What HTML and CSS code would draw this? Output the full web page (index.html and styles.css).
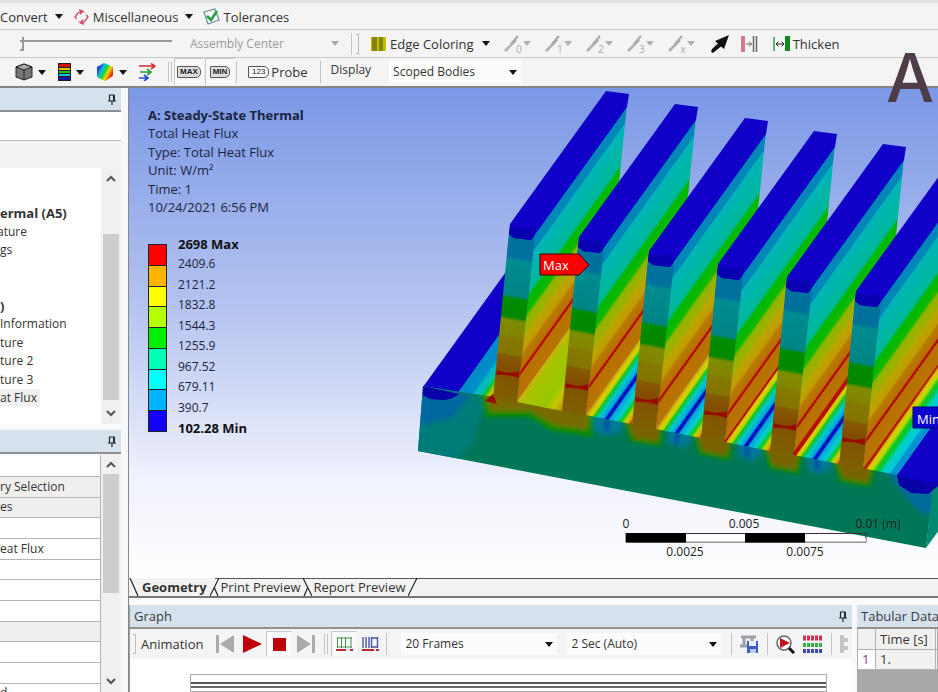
FILE: index.html
```html
<!DOCTYPE html>
<html lang="en">
<head>
<meta charset="utf-8">
<title>Steady-State Thermal</title>
<link rel="stylesheet" href="styles.css">
</head>
<body>
<svg class="defs" aria-hidden="true">
  <defs>
    <symbol id="pin" viewBox="0 0 8 11"><path d="M1.5 6.5V1h4.500v5.500M0 7h8M4 7v4" fill="none" stroke="#222" stroke-width="1.200"/><path d="M5 1h1.800v6H5z" fill="#222"/></symbol>
    <symbol id="edge" viewBox="0 0 18 17"><path d="M1 16 12 5" stroke="#b0b0b0" stroke-width="2.500"/><path d="M7 9 14 1" stroke="#a8a8a8" stroke-width="2"/></symbol>
    <symbol id="up" viewBox="0 0 10 8"><path d="M1 6 5 2 9 6" fill="none" stroke="#555" stroke-width="2"/></symbol>
    <symbol id="down" viewBox="0 0 10 8"><path d="M1 2 5 6 9 2" fill="none" stroke="#555" stroke-width="2"/></symbol>
  </defs>
</svg>
<div class="app">
  <header class="bars">
    <div class="bar bar-menu">
      <button class="tool">Convert<i class="caret"></i></button>
      <button class="tool"><svg width="17" height="16" viewBox="0 0 17 16"><path d="M6 3 2 8l4 5M11 13l4-5-4-5" fill="none" stroke="#d4476a" stroke-width="1.300" stroke-dasharray="9 3"/><path d="M6 0l5 2-4 4zM11 16l-5-2 4-4z" fill="#d4476a"/></svg>Miscellaneous<i class="caret"></i></button>
      <button class="tool"><svg width="17" height="17" viewBox="0 0 17 17"><path d="M1 4 12 1l4 11-11 4z" fill="#fff" stroke="#67859a" stroke-width="1.200"/><path d="M4 8l4 4 6-9" fill="none" stroke="#21a03b" stroke-width="2.500"/></svg>Tolerances</button>
    </div>
    <div class="bar bar-edges">
      <input class="explode" type="range" min="0" max="100" value="0" aria-label="Explode factor">
      <label class="pick pick-assembly"><select aria-label="Explode center" disabled><option>Assembly Center</option></select></label>
      <i class="rule"></i><i class="grip"></i>
      <button class="tool edge-color"><svg width="15" height="14" viewBox="0 0 15 14"><path d="M0 0h15v14H0z" fill="#c4c000"/><path d="M1 0h5v14H1zM8 0h4v14H8z" fill="#858400"/></svg>Edge Coloring<i class="caret"></i></button>
      <div class="edge-set">
        <button class="tool dim" aria-label="Edge 0"><span class="edge"><svg width="18" height="17"><use href="#edge"/></svg><small>0</small></span><i class="caret"></i></button>
        <button class="tool dim" aria-label="Edge 1"><span class="edge"><svg width="18" height="17"><use href="#edge"/></svg><small>1</small></span><i class="caret"></i></button>
        <button class="tool dim" aria-label="Edge 2"><span class="edge"><svg width="18" height="17"><use href="#edge"/></svg><small>2</small></span><i class="caret"></i></button>
        <button class="tool dim" aria-label="Edge 3"><span class="edge"><svg width="18" height="17"><use href="#edge"/></svg><small>3</small></span><i class="caret"></i></button>
        <button class="tool dim" aria-label="Edge x"><span class="edge"><svg width="18" height="17"><use href="#edge"/></svg><small>x</small></span><i class="caret"></i></button>
      </div>
      <button class="tool" aria-label="Direction"><svg width="18" height="18" viewBox="0 0 18 18"><path d="M18 0 13 14 10 11.500 2 18 0 17l1-3 6-5.500L4 6z" fill="#111"/></svg></button>
      <button class="tool" aria-label="Show mesh edges"><svg width="17" height="16" viewBox="0 0 17 16"><path d="M0 0h4v16H0z" fill="#d17a8c"/><path d="M12.500 0v16M15.500 0v16" stroke="#666" stroke-width="1.500"/><path d="M5 8h6M8 5.500 10.500 8 8 10.500" fill="none" stroke="#666"/></svg></button>
      <button class="tool thicken"><svg width="17" height="16" viewBox="0 0 17 16"><path d="M1 1v14" stroke="#35a048" stroke-width="1.500"/><path d="M12 0h5v15h-5z" fill="#0d8a17"/><path d="M3 8h8M5.500 5.500 3 8l2.500 2.500M8.500 5.500 11 8l-2.500 2.500" fill="none" stroke="#222"/></svg>Thicken</button>
    </div>
    <div class="bar bar-result">
      <button class="tool" aria-label="Geometry display"><svg width="18" height="18" viewBox="0 0 18 18"><path d="M9 1 17 4v10l-8 3-8-3V4z" fill="#777" stroke="#222"/><path d="M1 4l8 3 8-3-8-3z" fill="#aaa" stroke="#222"/><path d="M9 7v10" stroke="#222"/></svg><i class="caret"></i></button>
      <button class="tool" aria-label="Contours"><svg width="13" height="18" viewBox="0 0 13 18"><path d="M0 0h13v18H0z" fill="#222"/><path d="M1 1h11v3H1z" fill="#d01010"/><path d="M1 5h11v2H1z" fill="#f0c000"/><path d="M1 8h11v2H1z" fill="#20c020"/><path d="M1 11h11v2H1z" fill="#00c8d0"/><path d="M1 14h11v3H1z" fill="#1515a0"/></svg><i class="caret"></i></button>
      <button class="tool" aria-label="Isosurfaces"><svg width="18" height="18" viewBox="0 0 18 18"><defs><linearGradient id="iso" x1="0" y1=".2" x2="1" y2=".8"><stop offset=".1" stop-color="#2038e0"/><stop offset=".3" stop-color="#00c0e0"/><stop offset=".5" stop-color="#30d030"/><stop offset=".65" stop-color="#f0e000"/><stop offset=".85" stop-color="#f03010"/></linearGradient></defs><path d="M8 0 17 4v9l-8 5-8-4V4z" fill="url(#iso)"/></svg><i class="caret"></i></button>
      <button class="tool vectors" aria-label="Vectors"><svg width="17" height="18" viewBox="0 0 17 18"><path d="M0 3h16M12 .5 16 3l-4 3" fill="none" stroke="#d82c35" stroke-width="1.600"/><path d="M1 9h10M8 6l4 3-4 3" fill="none" stroke="#2f9b38" stroke-width="1.600"/><path d="M0 15h8M5 12l4 3-4 3" fill="none" stroke="#2449d8" stroke-width="1.600"/></svg></button>
      <i class="grip grip-double"></i>
      <button class="tool pressed"><span class="tag">MAX</span></button>
      <button class="tool pressed"><span class="tag">MIN</span></button>
      <i class="rule"></i>
      <button class="tool probe"><span class="tag tag-light">123</span>Probe</button>
      <i class="rule"></i>
      <label class="display" for="bodies">Display</label>
      <span class="pick pick-bodies"><select id="bodies"><option>Scoped Bodies</option></select></span>
    </div>
  </header>

  <aside class="side">
    <section class="outline">
      <header class="cap"><svg width="8" height="11"><use href="#pin"/></svg></header>
      <div class="filter"></div>
      <div class="strip"></div>
      <div class="scroller">
        <ul class="tree">
          <li><b>ermal (A5)</b></li>
          <li class="cut">ature</li>
          <li>gs</li>
          <li>&nbsp;</li>
          <li>&nbsp;</li>
          <li><b>)</b></li>
          <li>Information</li>
          <li>ture</li>
          <li>ture 2</li>
          <li>ture 3</li>
          <li><span class="picked">at Flux</span></li>
        </ul>
        <div class="track"><svg width="10" height="8"><use href="#up"/></svg><i class="thumb thumb-tree"></i><svg width="10" height="8"><use href="#down"/></svg></div>
      </div>
    </section>
    <section class="details">
      <header class="cap"><svg width="8" height="11"><use href="#pin"/></svg></header>
      <div class="scroller">
        <table class="props">
          <tbody>
            <tr><td></td></tr>
            <tr class="shade"><td>ry Selection</td></tr>
            <tr class="shade"><td>es</td></tr>
            <tr><td></td></tr>
            <tr><td>eat Flux</td></tr>
            <tr><td></td></tr>
            <tr><td></td></tr>
            <tr><td></td></tr>
            <tr class="shade"><td></td></tr>
            <tr><td></td></tr>
            <tr><td></td></tr>
            <tr><td>d</td></tr>
          </tbody>
        </table>
        <div class="track"><svg width="10" height="8"><use href="#up"/></svg><i class="thumb thumb-props"></i><svg width="10" height="8"><use href="#down"/></svg></div>
      </div>
    </section>
  </aside>

  <main class="work">
    <section class="view">
      <svg class="model" viewBox="130 88 808 490" preserveAspectRatio="xMaxYMin meet" role="img" aria-label="Heat flux contours on a finned heat sink">
        <defs>
          <linearGradient id="face" gradientUnits="userSpaceOnUse" x1="534" y1="237" x2="601" y2="285">
            <stop offset=".01" stop-color="#0085b8"/><stop offset=".09" stop-color="#0088b8"/>
            <stop offset=".1" stop-color="#00b4b8"/><stop offset=".34" stop-color="#00b898"/>
            <stop offset=".37" stop-color="#00b800"/><stop offset=".47" stop-color="#10b800"/>
            <stop offset=".5" stop-color="#90b400"/><stop offset=".6" stop-color="#a4b000"/>
            <stop offset=".61" stop-color="#bca600"/><stop offset=".7" stop-color="#c09c00"/>
            <stop offset=".72" stop-color="#b87c00"/><stop offset=".81" stop-color="#b86c00"/>
            <stop offset=".815" stop-color="#b41000"/><stop offset=".84" stop-color="#b41000"/>
            <stop offset=".845" stop-color="#b87000"/><stop offset="1" stop-color="#b87400"/>
          </linearGradient>
          <linearGradient id="front" gradientUnits="userSpaceOnUse" x1="509" y1="234" x2="479" y2="397">
            <stop offset=".13" stop-color="#00709c"/><stop offset=".15" stop-color="#008c90"/>
            <stop offset=".36" stop-color="#008484"/><stop offset=".38" stop-color="#008c00"/>
            <stop offset=".49" stop-color="#048800"/><stop offset=".51" stop-color="#7e8c00"/>
            <stop offset=".6" stop-color="#848400"/><stop offset=".61" stop-color="#847a00"/>
            <stop offset=".71" stop-color="#847400"/><stop offset=".72" stop-color="#845c00"/>
            <stop offset=".8" stop-color="#844c00"/><stop offset=".9" stop-color="#805800"/>
            <stop offset="1" stop-color="#7c6000"/>
          </linearGradient>
          <linearGradient id="floorA" gradientUnits="userSpaceOnUse" x1="517" y1="402" x2="551" y2="426">
            <stop offset="0" stop-color="#c8b400"/><stop offset=".15" stop-color="#a8c400"/>
            <stop offset=".6" stop-color="#98c800"/><stop offset=".8" stop-color="#c8c400"/><stop offset="1" stop-color="#b89000"/>
          </linearGradient>
          <linearGradient id="floorB" gradientUnits="userSpaceOnUse" x1="517" y1="402" x2="551" y2="426">
            <stop offset="0" stop-color="#c88c00"/><stop offset=".07" stop-color="#d8d000"/><stop offset=".14" stop-color="#c0d000"/>
            <stop offset=".18" stop-color="#10c820"/><stop offset=".25" stop-color="#00c880"/><stop offset=".29" stop-color="#00c8d0"/>
            <stop offset=".4" stop-color="#00a4d8"/><stop offset=".44" stop-color="#0010c0"/><stop offset=".49" stop-color="#0010c0"/>
            <stop offset=".53" stop-color="#00a4d8"/><stop offset=".68" stop-color="#00d0d0"/><stop offset=".78" stop-color="#10c820"/>
            <stop offset=".86" stop-color="#c0d400"/><stop offset=".95" stop-color="#d8a000"/><stop offset="1" stop-color="#b83000"/>
          </linearGradient>
          <linearGradient id="floorC" gradientUnits="userSpaceOnUse" x1="862" y1="468" x2="889" y2="487">
            <stop offset="0" stop-color="#b81000"/><stop offset=".1" stop-color="#b81000"/><stop offset=".16" stop-color="#d8c800"/>
            <stop offset=".28" stop-color="#c0d800"/><stop offset=".38" stop-color="#10c820"/><stop offset=".48" stop-color="#00c840"/>
            <stop offset=".58" stop-color="#00d0c8"/><stop offset=".78" stop-color="#00c8d8"/><stop offset=".8" stop-color="#0098d0"/><stop offset="1" stop-color="#0090d0"/>
          </linearGradient>
          <linearGradient id="floorL" gradientUnits="userSpaceOnUse" x1="457" y1="393" x2="485" y2="413">
            <stop offset="0" stop-color="#0088c8"/><stop offset=".38" stop-color="#0090c8"/><stop offset=".42" stop-color="#00b8c8"/>
            <stop offset=".6" stop-color="#00c0a8"/><stop offset=".68" stop-color="#10c020"/><stop offset=".8" stop-color="#c0c800"/>
            <stop offset=".92" stop-color="#c89000"/><stop offset="1" stop-color="#b41000"/>
          </linearGradient>
          <filter id="soft" x="-20%" y="-20%" width="140%" height="140%"><feGaussianBlur stdDeviation="2"/></filter>
          <clipPath id="baseClip"><path d="M423 386 493 397 862 466 934 482 926 548 418 451z"/></clipPath>
          <g id="fin">
            <path d="M534 235 627 104 610 272 517 402z" fill="url(#face)"/>
            <path d="M509 232 535 235 517 403 493 399z" fill="url(#front)"/>
            <path d="M497 370q11 5 22 1v7q-11-4-23-3z" fill="#980c00"/>
            <path d="M510 224 606 91 629 94 627 107 534 236 531 240 514 238 509 234z" fill="#1000c8"/>
            <path d="M510 226q12 4 24 1v9l-3 4-17-2-5-4z" fill="#0800b0"/>
          </g>
          <path id="floor" d="M517 402 562 411 655 281 610 272z"/>
          <path id="rim" d="M517 402 610 272" stroke="#b81000" fill="none"/>
        </defs>
        <path d="M423 387 516 258 560 267 457 394z" fill="#1000c8"/>
        <path d="M457 394 493 400 586 270 550 263z" fill="url(#floorL)"/>
        <path d="M423 386 493 397 862 466 934 482 926 548 418 451z" fill="#007858"/>
        <g clip-path="url(#baseClip)">
          <g filter="url(#soft)">
            <path d="M415 380 485 398 474 440 455 462 410 455z" fill="#007c78"/>
            <path d="M415 380 470 396 452 418 415 426z" fill="#0068a0"/>
            <path d="M480 385 488 414 530 414 553 428 590 433 592 402z" fill="#786c00" stroke="#088c00" stroke-width="6"/>
            <path d="M594 412v18l12 6 14-4 4-18z" fill="#007898"/>
            <path d="M623 413 632 440 659 444 664 417z" fill="#786400" stroke="#088800" stroke-width="4"/>
            <path d="M668 424v18l12 6 10-4 2-18z" fill="#007898"/>
            <path d="M692 426 701 453 728 458 734 430z" fill="#786400" stroke="#088800" stroke-width="4"/>
            <path d="M738 437v18l10 6 12-4 2-18z" fill="#007898"/>
            <path d="M762 439 771 467 797 472 803 444z" fill="#786400" stroke="#088800" stroke-width="4"/>
            <path d="M808 450v18l10 6 12-4 2-18z" fill="#007898"/>
            <path d="M832 452 841 480 869 485 876 457z" fill="#786400" stroke="#088800" stroke-width="4"/>
            <path d="M886 470 899 489 916 509 940 520V478z" fill="#006c9c"/>
            <path d="M607 419v12M677 432v12M747 445v12M817 458v12" stroke="#0040a8" stroke-width="4"/>
          </g>
          <path d="M423 386 459 394q-8 6-17 6l-12-1-7-4z" fill="#0a00a8"/>
        </g>
        <path d="M926 548 933 484 945 468V522z" fill="#008870"/>
        <path d="M862 468 897 475 990 345 955 338z" fill="url(#floorC)"/>
        <path d="M897 475 944 409V478L934 485z" fill="#1000c8"/>
        <path d="M897 475 934 484 938 480v6l-10 8-17-1-12-8z" fill="#0a00a8"/>
        <use href="#fin"/>
        <use href="#floor" fill="url(#floorA)"/>
        <use href="#fin" x="69" y="13"/>
        <use href="#floor" x="69" y="13" fill="url(#floorB)"/>
        <use href="#fin" x="139" y="27"/>
        <use href="#floor" x="139" y="27" fill="url(#floorB)"/>
        <use href="#fin" x="208" y="40"/>
        <use href="#floor" x="208" y="40" fill="url(#floorB)"/>
        <use href="#rim" x="208" y="40" stroke-width="2"/>
        <use href="#fin" x="277" y="53"/>
        <use href="#floor" x="277" y="53" fill="url(#floorB)"/>
        <use href="#rim" x="277" y="53" stroke-width="4"/>
        <use href="#fin" x="346" y="67"/>
        <path d="M493 394l-8 7 12 3z" fill="#980c00"/>
        <path d="M540 254H579L589 265 579 275H540z" fill="#fa0000" stroke="#400"/>
        <text x="543" y="270" class="flag">Max</text>
        <path d="M913 407H945V428H913z" fill="#0a00d0" stroke="#000070"/>
        <text x="917" y="424" class="flag">Min</text>
        <g class="scale">
          <path d="M626 533.500H866V542H626z" fill="none" stroke="#333"/>
          <path d="M686 534H746V541.500H686zM806 534H842L866 539V541.500H806z" fill="#fff"/>
          <path d="M626 533H686V542.500H626zM745 533H805V542.500H745z" fill="#000"/>
          <text x="626" y="528">0</text><text x="744" y="528">0.005</text><text x="878" y="528">0.01 (m)</text>
          <text x="685" y="556">0.0025</text><text x="805" y="556">0.0075</text>
        </g>
      </svg>
      <div class="overlay">
        <div class="info">
          <b>A: Steady-State Thermal</b>
          <span>Total Heat Flux</span>
          <span>Type: Total Heat Flux</span>
          <span>Unit: W/m²</span>
          <span>Time: 1</span>
          <span>10/24/2021 6:56 PM</span>
        </div>
        <div class="legend">
          <div class="ramp"><i class="c1"></i><i class="c2"></i><i class="c3"></i><i class="c4"></i><i class="c5"></i><i class="c6"></i><i class="c7"></i><i class="c8"></i><i class="c9"></i></div>
          <div class="levels"><b>2698 Max</b><span>2409.6</span><span>2121.2</span><span>1832.8</span><span>1544.3</span><span>1255.9</span><span>967.52</span><span>679.11</span><span>390.7</span><b>102.28 Min</b></div>
        </div>
      </div>
    </section>
    <nav class="tabs">
      <svg width="10" height="19" viewBox="0 0 10 19"><path d="M1 0 9 18" stroke="#222" stroke-width="1.200"/></svg>
      <button class="tab current">Geometry</button>
      <svg width="9" height="19" viewBox="0 0 9 19"><path d="M0 18 9 0M4 9 8 18" fill="none" stroke="#222" stroke-width="1.200"/></svg>
      <button class="tab">Print Preview</button>
      <svg width="9" height="19" viewBox="0 0 9 19"><path d="M0 0 9 18M1 18 5 9" fill="none" stroke="#222" stroke-width="1.200"/></svg>
      <button class="tab">Report Preview</button>
      <svg width="9" height="19" viewBox="0 0 9 19"><path d="M0 18 9 0" stroke="#222" stroke-width="1.200"/></svg>
    </nav>
    <div class="lower">
      <section class="graph">
        <header class="cap">Graph<svg width="8" height="11"><use href="#pin"/></svg></header>
        <div class="player">
          <i class="grip"></i>
          <span class="word">Animation</span>
          <button class="tool step" aria-label="First"><svg width="18" height="18" viewBox="0 0 18 18"><path d="M0 0h3v18H0zM18 0v18L4 9z" fill="#aaa"/></svg></button>
          <button class="tool step" aria-label="Play"><svg width="19" height="18" viewBox="0 0 19 18"><path d="M0 0v18l19-9z" fill="#c00008"/></svg></button>
          <button class="tool step pressed" aria-label="Stop"><svg width="13" height="13"><path d="M0 0h13v13H0z" fill="#c00008"/></svg></button>
          <button class="tool step" aria-label="Last"><svg width="18" height="18" viewBox="0 0 18 18"><path d="M15 0h3v18h-3zM0 0v18l14-9z" fill="#aaa"/></svg></button>
          <i class="grip grip-double"></i>
          <button class="tool chart pressed" aria-label="Distributed"><svg width="17" height="14" viewBox="0 0 17 14"><path d="M1.500 0v11M5.500 0v11M9.500 0v11M15 0v11M1 1h15M1 10h15" fill="none" stroke="#489050"/><path d="M0 13h10M14 13h3" stroke="#b82838" stroke-width="2"/></svg></button>
          <button class="tool chart" aria-label="Result sets"><svg width="17" height="14" viewBox="0 0 17 14"><path d="M1 0v11M4 0v11M7 0v11M9.500 0v11M15.500 0v11M10 1h6M10 10h6" fill="none" stroke="#4858a8" stroke-width="1.400"/><path d="M0 13h12M14 13h3" stroke="#b82838" stroke-width="2"/></svg></button>
          <i class="rule"></i>
          <span class="pick pick-frames"><select aria-label="Frames"><option>20 Frames</option></select></span>
          <span class="pick pick-time"><select aria-label="Duration"><option>2 Sec (Auto)</option></select></span>
          <i class="rule"></i>
          <button class="tool" aria-label="Export video"><svg width="19" height="19" viewBox="0 0 19 19"><path d="M1 2h15M4 3v8M0 11h7M12 3v3" fill="none" stroke="#9a9fa8" stroke-width="3"/><path d="M7 6h11v12H7z" fill="#3c60c8"/><path d="M9 6h7v5H9z" fill="#e8eefc"/><path d="M10 14h6v4h-6z" fill="#b8c8f0"/></svg></button>
          <i class="rule"></i>
          <button class="tool" aria-label="Zoom to fit"><svg width="19" height="19" viewBox="0 0 19 19"><circle cx="8" cy="8" r="7" fill="#fff" stroke="#666" stroke-width="1.500"/><path d="M4 3v10l10-5z" fill="#c01020"/><path d="M13 13l5 5" stroke="#111" stroke-width="3"/></svg></button>
          <button class="tool" aria-label="Sections"><svg width="20" height="18" viewBox="0 0 20 18"><path d="M0 3h20" stroke="#d83050" stroke-width="5" stroke-dasharray="3 1"/><path d="M0 10h20" stroke="#30b048" stroke-width="4" stroke-dasharray="3 1"/><path d="M0 16h20" stroke="#3848c0" stroke-width="4" stroke-dasharray="3 1"/></svg></button>
          <i class="rule"></i>
          <svg class="ghost" width="8" height="18" viewBox="0 0 8 18"><path d="M0 0h4v18H0zM4 3h4v4H4zM4 11h4v4H4z" fill="#c4c4c4"/></svg>
        </div>
        <div class="timeline"><div class="rail"></div></div>
      </section>
      <section class="tabular">
        <header class="cap">Tabular Data</header>
        <table class="grid">
          <thead><tr><th></th><th>Time [s]</th><th></th></tr></thead>
          <tbody><tr><th>1</th><td>1.</td><td></td></tr></tbody>
        </table>
      </section>
    </div>
  </main>
  <div class="watermark">A</div>
</div>
</body>
</html>
```
FILE: styles.css
```css
* { box-sizing: border-box; }
html, body { height: 100%; }
body {
  margin: 0;
  overflow: hidden;
  background: #f3f3f3;
  color: #333;
  font: 12px/18px "Open Sans", "Noto Sans", sans-serif;
}
svg { display: block; flex: none; }
.defs { position: absolute; width: 0; height: 0; }
button, select {
  margin: 0;
  padding: 0;
  border: 0;
  background: none;
  color: inherit;
  font: inherit;
  white-space: nowrap;
}
select { appearance: none; opacity: 1; }

.app {
  position: relative;
  display: grid;
  grid-template: auto minmax(0, 1fr) / 129px minmax(0, 1fr);
  height: 100vh;
  overflow: hidden;
}

/* Toolbars */
.bars { grid-column: 1 / -1; border-bottom: 2px solid #858585; }
.bar { display: flex; align-items: center; overflow: hidden; background: #f4f4f4; font-size: 13px; }
.bar-menu { height: 30px; gap: 10px; padding-top: 1px; border-top: 3px solid #e2e2e2; border-bottom: 1px solid #c8c8c8; }
.bar-edges { height: 28px; border-bottom: 1px solid #c8c8c8; }
.bar-result { height: 28px; padding-left: 15px; }
.tool { display: flex; flex: none; align-items: center; gap: 3px; }
.caret {
  flex: none;
  border: solid transparent;
  border-width: 5px 4px 0;
  border-top-color: #111;
  margin-left: 4px;
}
.rule { flex: none; width: 1px; height: 22px; background: #c4c4c4; }
.grip { flex: none; width: 3px; height: 20px; border: 1px solid #bbb; border-left: 0; }
.grip-double { width: 4px; border: solid #c4c4c4; border-width: 0 1px; }
.pressed { border: 1px solid #c8c8c8; border-right-color: #f4f4f4; border-bottom-color: #f4f4f4; background: #f9f9f9; }

.pick { position: relative; display: flex; flex: none; align-items: center; height: 22px; background: #fcfcfc; font-size: 12px; }
.pick select { width: 100%; height: 100%; padding-left: 4px; }
.pick::after {
  content: "";
  position: absolute;
  right: 4px;
  border: solid transparent;
  border-width: 5px 4px 0;
  border-top-color: #111;
  pointer-events: none;
}
.explode { appearance: none; flex: none; width: 152px; height: 16px; margin: 0 14px 0 20px; background: linear-gradient(#999, #999) 0 4px / 100% 2px no-repeat; }
.explode::-webkit-slider-thumb { appearance: none; width: 4px; height: 14px; border: solid #999; border-width: 0 2px 2px 0; }
.pick-assembly { width: 159px; margin-right: 6px; background: none; color: #9a9a9a; }
.pick-assembly select { color: #9a9a9a; }
.pick-assembly::after { border-top-color: #aaa; right: 6px; }
.bar-edges .grip { margin: 0 12px 0 4px; }
.edge-set { display: flex; gap: 14px; margin: 0 16px 0 14px; }
.dim { gap: 0; color: #aaa; }
.dim .caret { margin-left: 1px; border-top-color: #b0b0b0; }
.edge { position: relative; }
.edge small { position: absolute; right: 0; bottom: -3px; font-size: 10px; line-height: 12px; }
.edge-color { gap: 4px; }
.bar-edges > .tool + .tool { margin-left: 12px; }
.bar-edges > .thicken.tool { margin-left: 15px; }

.bar-result > .tool { margin-right: 12px; gap: 1px; }
.bar-result > .tool.pressed { width: 30px; height: 28px; margin-right: 1px; justify-content: center; }
.bar-result > .grip-double { margin-right: 2px; }
.bar-result > .probe { margin: 0 12px 0 11px; gap: 2px; }
.tag {
  height: 12px;
  padding: 0 2px;
  border: 1px solid #555;
  border-radius: 1px 5px 5px 1px;
  background: #ddd;
  color: #222;
  font: bold 8px/10px "Liberation Sans", sans-serif;
}
.tag-light { padding: 0 3px; background: #fafafa; font-weight: normal; }
.display { margin: 0 18px 4px 10px; font-size: 12px; }
.pick-bodies { width: 132px; }

/* Side panels */
.side { display: grid; grid-template-rows: 342px minmax(0, 1fr); padding-right: 7px; border-right: 1px solid #888; background: #f8f8f8; min-height: 0; }
.side section { display: flex; flex-direction: column; min-height: 0; overflow: hidden; }
.cap { display: flex; flex: none; align-items: center; justify-content: space-between; height: 24px; background: #d5e2ee; border-bottom: 2px solid #909090; padding: 0 5px 0 4px; font-size: 13px; color: #3a3a3a; white-space: nowrap; }
.side .cap { justify-content: flex-end; }
.filter { flex: none; height: 29px; background: #fff; border-bottom: 1px solid #bbb; }
.strip { flex: none; height: 27px; background: #f2f2f2; }
.scroller { display: flex; flex: 1; min-height: 0; }
.outline .scroller { flex: none; height: 256px; background: #fff; }
.tree { display: flex; flex: 1; flex-direction: column; justify-content: space-between; height: 203px; margin: 36px 0 0; padding: 0; list-style: none; white-space: nowrap; }
.tree li { height: 18px; }
.tree b { font-size: 13px; }
.tree .cut { text-indent: -3px; }
.picked { padding-right: 3px; background: #f0f0f0; }
.track { display: flex; flex: none; flex-direction: column; align-items: center; justify-content: space-between; width: 20px; padding: 7px 2px; background: #f0f0f0; }
.track .thumb { flex: none; width: 100%; background: #cdcdcd; }
.thumb-tree { height: 166px; margin: auto 0 9px; }
.thumb-props { height: 119px; margin: 5px 0 auto; }
.props { flex: 1; align-self: flex-start; margin-top: 1px; border-collapse: collapse; background: #fff; }
.props td { height: 21px; padding: 0; border-bottom: 1px solid #b4b4b4; border-right: 1px solid #b4b4b4; line-height: 18px; white-space: nowrap; }
.props tr:nth-child(3n) td { height: 20px; }
.props .shade { background: #f0efee; }

/* Model view */
.work { display: flex; flex-direction: column; min-width: 0; min-height: 0; }
.view { position: relative; flex: 1; min-height: 0; background: linear-gradient(#7b98e6, #b5c4f0 45%, #f0f2fd 80%, #fff); }
.model { position: absolute; inset: 0; width: 100%; height: 100%; }
.flag { fill: #fff; font-size: 13px; }
.scale text { fill: #222; font-size: 12px; text-anchor: middle; }
.overlay { position: relative; padding: 18px 0 0 19px; color: #1c2440; }
.info { display: flex; flex-direction: column; justify-content: space-between; height: 110px; font-size: 13px; }
.legend { display: flex; gap: 11px; margin-top: 19px; font-size: 12px; }
.ramp { display: flex; flex-direction: column; width: 19px; height: 188px; margin-top: 9px; border: 1px solid #222; }
.ramp i { flex: 1; border-bottom: 1px solid #222; }
.ramp i:last-child { border: 0; }
.c1 { background: #f00; }
.c2 { background: #ffb400; }
.c3 { background: #ff0; }
.c4 { background: #b4ff00; }
.c5 { background: #0e0; }
.c6 { background: #00ffb4; }
.c7 { background: #0ff; }
.c8 { background: #00b4ff; }
.c9 { background: #10f; }
.levels { display: flex; flex-direction: column; justify-content: space-between; height: 202px; }
.levels b { font-size: 13px; color: #111; }

.tabs { display: flex; flex: none; align-items: center; height: 20px; border-bottom: 2px solid #777; background: linear-gradient(#555, #555) 86px 0 / 100% 1px no-repeat, #f3f3f3; }
.tab { padding: 0 2px; font-size: 13px; }
.current { padding: 0 3px; font-weight: bold; }

/* Lower panels */
.lower { display: grid; grid-template-columns: minmax(0, 1fr) 81px; gap: 5px; flex: none; height: 94px; padding-top: 7px; background: #fafafa; }
.lower section { min-width: 0; overflow: hidden; }
.graph { background: #fff; border-left: 1px solid #999; }
.player { display: flex; align-items: center; height: 30px; background: #f4f4f4; padding-left: 3px; }
.player > .grip { margin-right: 5px; }
.word { margin-right: 9px; font-size: 13px; }
.step { justify-content: center; width: 26px; height: 26px; }
.step + .step { margin-left: 1px; }
.player > .grip-double { margin: 0 3px 0 5px; }
.chart { justify-content: center; width: 26px; height: 26px; }
.chart + .rule { margin: 0 14px 0 3px; }
.pick-frames { width: 156px; margin-right: 10px; }
.pick-time { width: 154px; margin-right: 10px; }
.player > .rule + .tool { margin: 0 8px; }
.player > .tool:nth-last-child(3) { margin-right: 8px; }
.ghost { margin-left: 8px; }
.timeline { padding: 15px 25px 0 60px; }
.rail { height: 18px; border: 1px solid #aaa; background: linear-gradient(#555 2px, #fff 2px 4px, #666 4px) 0 7px / 100% 6px no-repeat; }
.tabular { background: #a8a8a8; }
.grid { width: 100%; border-collapse: collapse; table-layout: fixed; background: #f3f1f0; font-size: 13px; }
.grid th, .grid td { height: 20px; padding: 0 0 0 4px; border: 1px solid #b0b0b0; border-top: 0; font-weight: normal; text-align: left; white-space: nowrap; }
.grid th:first-child { width: 18px; }
.grid th:nth-child(2) { width: 60px; }
.grid tbody th { color: #7a3a78; background: #fff; }

.watermark { position: absolute; top: 37px; left: 886px; color: #4e3d49; font: 500 68px/80px Inter, sans-serif; }
```
